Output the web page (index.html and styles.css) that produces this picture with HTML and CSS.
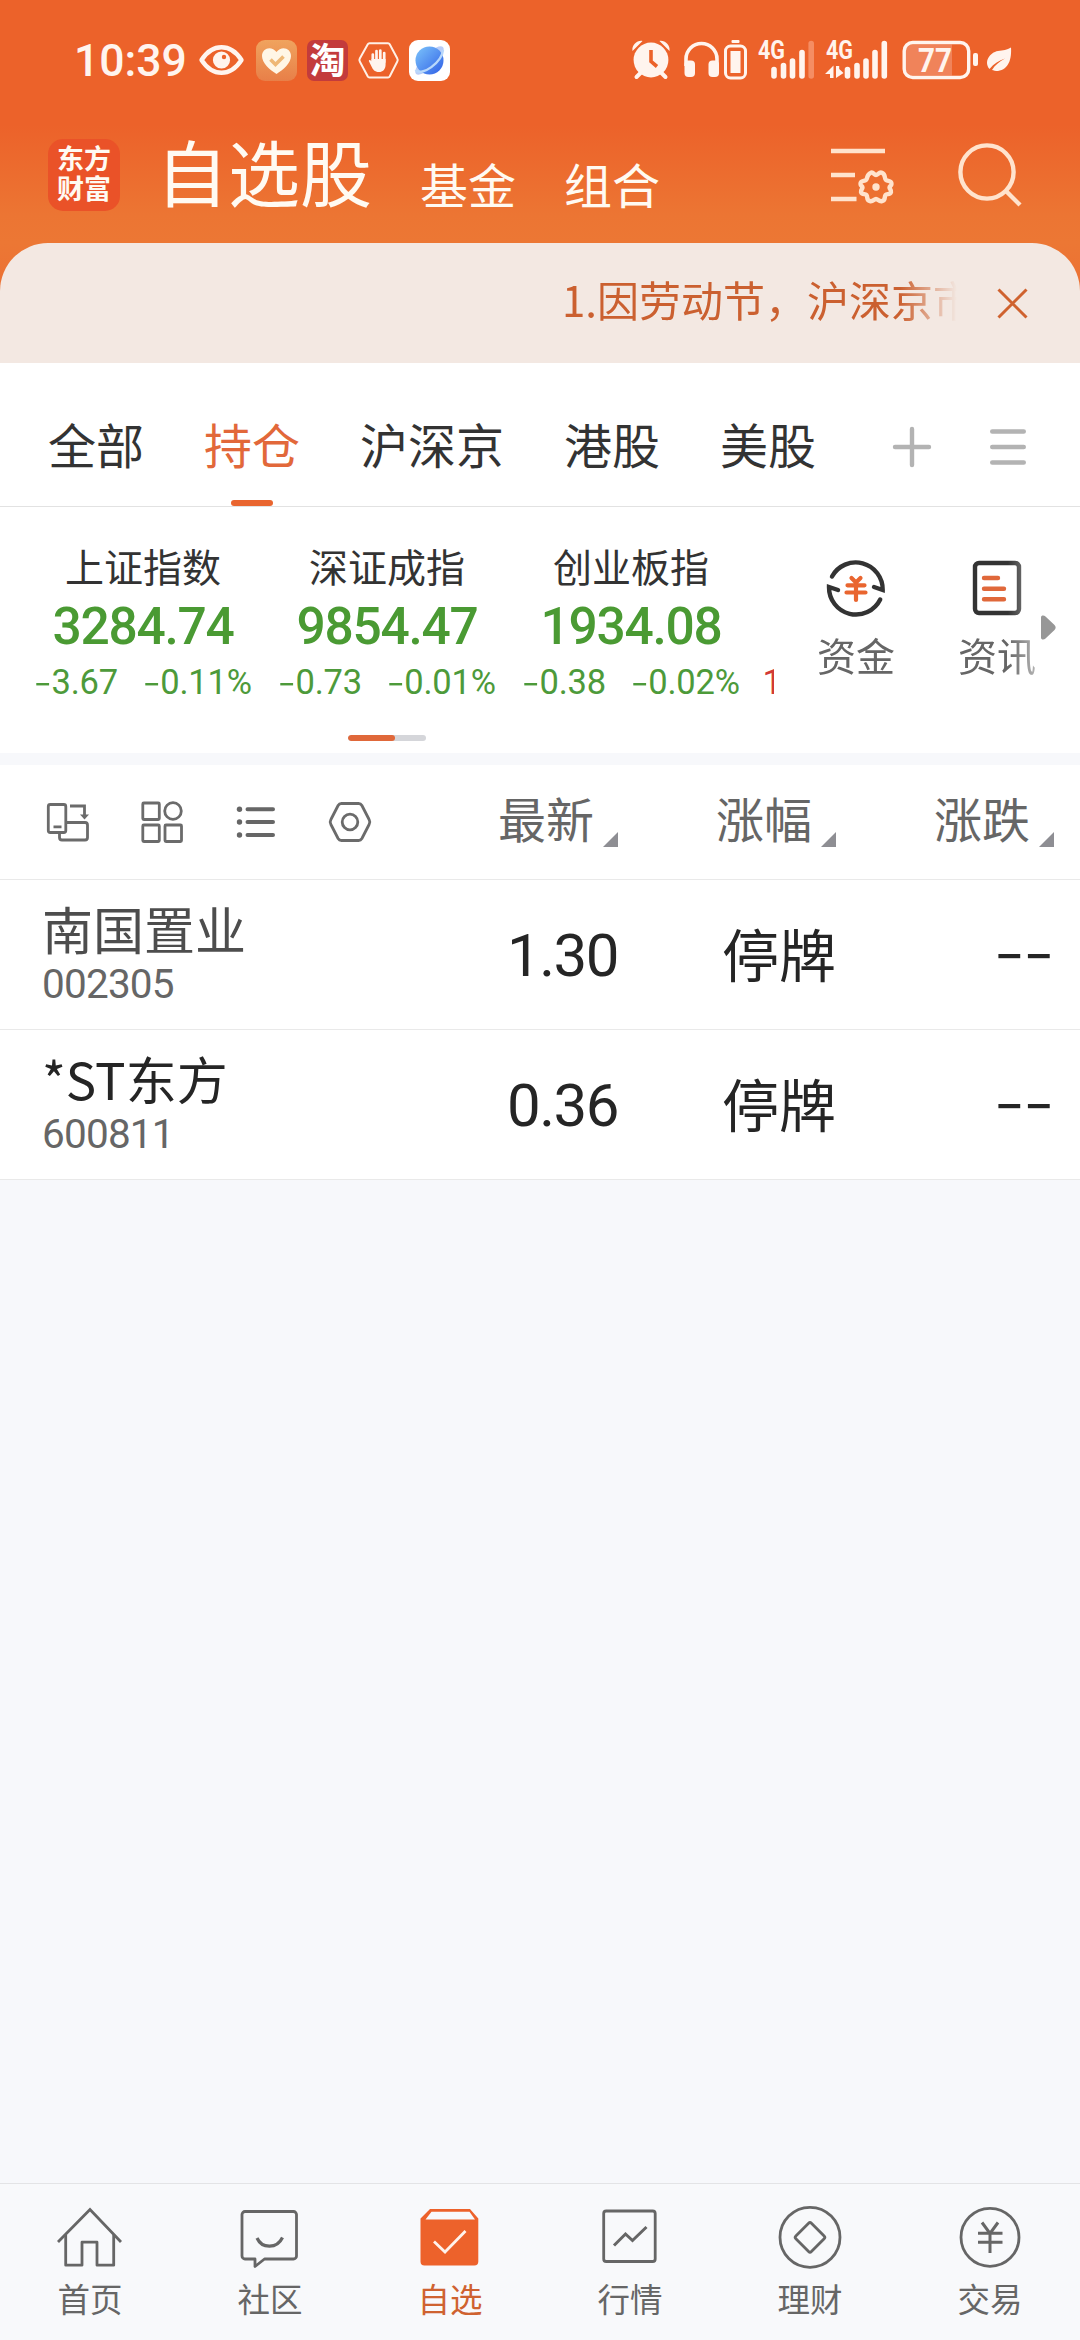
FILE: index.html
```html
<!DOCTYPE html>
<html lang="zh-CN">
<head>
<meta charset="utf-8">
<title>自选股</title>
<link rel="stylesheet" href="styles.css">
</head>
<body>
<div class="app">
  <header class="top">
    <div class="status">
      <div class="status-left">
        <span class="clock">10:39</span>
        <svg width="46" height="44" viewBox="199 38 46 44"><path d="M201.5 60c11-17 29-17 40 0c-11 17-29 17-40 0z" fill="none" stroke="#fff4ee" stroke-width="4.4" stroke-linejoin="round"/><circle cx="221.5" cy="60" r="8.6" fill="#fff4ee"/><circle cx="224" cy="57" r="2.2" fill="#ec622a"/></svg>
        <svg class="g11" width="41" height="41" viewBox="0 0 41 41"><defs><linearGradient id="h" x2="0" y2="1"><stop offset="0" stop-color="#f0a35e"/><stop offset="1" stop-color="#e87f48"/></linearGradient></defs><rect width="41" height="41" rx="9" fill="url(#h)"/><path d="M20.500 34C14 30 6 23 6 16C6 7.500 16 5.500 20.500 12C25 5.500 35 7.500 35 16C35 23 27 30 20.500 34z" fill="#fff6e6"/><path d="M14.500 19.500l5 5l8-8" fill="none" stroke="#efb876" stroke-width="3.600"/></svg>
        <span class="tao">淘</span>
        <svg class="g10" width="41" height="41" viewBox="358 40 41 41"><path d="M369.500 43.300h18.500a2 2 0 0 1 1.700 1l7.600 14.200a3 3 0 0 1 0 3L389.700 76.500a2 2 0 0 1-1.700 1h-18.500a2 2 0 0 1-1.700-1l-8-15a3 3 0 0 1 0-3l8-14.200a2 2 0 0 1 1.700-1z" fill="none" stroke="#fff0e6" stroke-width="2"/><path d="M372.800 62V54.500M376.500 61V51M380.300 61V50.500M384.200 62V53" stroke="#fff4ee" stroke-width="2.700" stroke-linecap="round"/><path d="M371.500 59h14.100v5.500c0 5-3 7.500-6.600 7.500c-4.500 0-6-2.500-7.500-5.500l-2.700-5.500c0-1.500 1.700-1.500 2.700.500z" fill="#fff4ee"/></svg>
        <svg class="g10" width="41" height="41" viewBox="0 0 41 41"><defs><linearGradient id="b" x2="1" y2="1"><stop offset="0" stop-color="#7cc4fb"/><stop offset="1" stop-color="#2f5fe6"/></linearGradient></defs><rect width="41" height="41" rx="9" fill="#fff"/><ellipse cx="20.500" cy="20.500" rx="19" ry="6.500" transform="rotate(-45 20.500 20.500)" fill="#b9cdf8"/><circle cx="20.500" cy="20.500" r="14" fill="url(#b)"/><path d="M6.500 30C13 37 33 22 34 10" fill="none" stroke="#b8d8fb" stroke-width="2.400"/></svg>
      </div>
      <div class="status-right">
        <svg width="38" height="44" viewBox="632.500 38 38 44"><g fill="#fff4ee"><circle cx="651.500" cy="60" r="17.400"/><path d="M633 51c-1-6 5-11 10-10zM670 51c1-6-5-11-10-10z"/></g><path d="M641 73l-4 4M662 73l4 4" stroke="#fff4ee" stroke-width="4" stroke-linecap="round"/><path d="M651.500 50v11.500l6 5" fill="none" stroke="#ec622a" stroke-width="3.600"/></svg>
        <svg class="g14" width="35" height="44" viewBox="684 38 35 44"><path d="M686 66v-7a15.500 15.500 0 0 1 31 0v7" fill="none" stroke="#fff4ee" stroke-width="3.600"/><rect x="684.500" y="60.500" width="10.500" height="16.500" rx="4" fill="#fff4ee"/><rect x="708.500" y="60.500" width="10.500" height="16.500" rx="4" fill="#fff4ee"/></svg>
        <svg class="g5" width="23" height="44" viewBox="724 38 23 44"><rect x="731.500" y="40" width="8" height="3" rx="1" fill="#fff4ee"/><rect x="725.500" y="46" width="20" height="32" rx="5" fill="none" stroke="#fff4ee" stroke-width="3"/><rect x="730.500" y="51" width="10" height="22" fill="#fff4ee"/></svg>
        <svg class="g10" width="58" height="44" viewBox="757 38 58 44"><text x="758" y="59" class="net" textLength="27" lengthAdjust="spacingAndGlyphs">4G</text><path d="M774 69.500V76M783.500 65.500V76M792.500 61V76M802 52.500V76" stroke="#fff4ee" stroke-width="5.600" stroke-linecap="round"/><path d="M811.200 43.500V76" stroke="#f58d63" stroke-width="5.600" stroke-linecap="round"/></svg>
        <svg class="g10" width="63" height="44" viewBox="825 38 63 44"><text x="826" y="59" class="net" textLength="27" lengthAdjust="spacingAndGlyphs">4G</text><path d="M847.500 69.500V76M857 65.500V76M866 61V76M875 52.500V76M884.300 43.500V76" stroke="#fff4ee" stroke-width="5.600" stroke-linecap="round"/><path d="M825 74l8.500-8.500V78h-3.500v-4zM836 66h3.200v3l4.300 4-7.500 5z" fill="#fff4ee"/></svg>
        <svg class="g14" width="77" height="44" viewBox="902 38 77 44"><path d="M912 44.500h40v31h-40a7 7 0 0 1-7-7V51.500a7 7 0 0 1 7-7z" fill="#f0835a"/><rect x="904.200" y="42.500" width="64.500" height="35" rx="8.500" fill="none" stroke="#fff4ee" stroke-width="3.400"/><rect x="973" y="53" width="5" height="13" rx="2" fill="#fff4ee"/><text x="918" y="72" class="bat" textLength="34" lengthAdjust="spacingAndGlyphs">77</text></svg>
        <svg class="g7" width="26" height="44" viewBox="986 38 26 44"><path d="M1011 47.500c.8 11-2 22-13 23.500c-2.500 0-4.500-.500-6-1c3-5 7-8 13-11.500c-6 2-11 5-15.500 10.500c-6-7 0-16.500 8.500-18c5-.800 9-1 13-3.500z" fill="#fff4ee"/></svg>
      </div>
    </div>
    <div class="titlebar">
      <div class="logo"><span>东方</span><span>财富</span></div>
      <h1>自选股</h1>
      <span class="sub">基金</span>
      <span class="sub">组合</span>
      <svg class="cfg" width="66" height="64" viewBox="829 141 66 64"><g fill="none" stroke="#ffe3cd" stroke-width="4.400"><path d="M831 151h54M831 175h24M831 199h25.500"/><path stroke-linejoin="round" d="M871 172.700C873 171.500 874 175 876 175C878 175 879 171.500 882 172.700C886 174.500 884 178.500 886 180C888 181.500 891.500 180 891.500 184C891.500 186 889.500 186 889.500 187.500C889.500 189 891.500 190 891 192C890 195 887 193.500 885.500 195C884 197 886 200 882 201.200C879 202 878 199 876 199C874 199 873 202 870 201.200C866 200 868 197 866.500 195C865 193.500 862 195 861 192C860.500 190 862.500 189 862.500 187.500C862.500 186 860.500 186 860.500 184C860.500 180 864 181.500 866 180C868 178.500 866 174.500 871 172.700z"/></g><circle cx="876" cy="187" r="3.700" fill="#ffe3cd"/></svg>
      <svg class="search" width="66" height="68" viewBox="957 141 66 68"><g fill="none" stroke="#ffe3cd" stroke-width="4.400"><circle cx="987" cy="172" r="26.600"/><path d="M1005.500 190.500l14.500 14.500"/></g></svg>
    </div>
  </header>

  <div class="notice-back"><div class="notice">
    <div class="marquee"><span>1.因劳动节，沪深京市</span></div>
    <svg width="31" height="31" viewBox="0 0 31 31"><path d="M1.500 1.500l28 28M29.500 1.500l-28 28" stroke="#cf622f" stroke-width="3"/></svg>
  </div></div>

  <nav class="tabs">
    <span>全部</span><span class="on">持仓</span><span>沪深京</span><span>港股</span><span>美股</span>
    <svg class="plus" width="40" height="42" viewBox="0 0 40 42"><path d="M3 21h34M20 3v36" stroke="#b3b3b3" stroke-width="4.400" stroke-linecap="round"/></svg>
    <svg class="more" width="38" height="38" viewBox="0 0 38 38"><path d="M3.200 3.500h31.600M3.200 19h31.600M3.200 34.500h31.600" stroke="#b3b3b3" stroke-width="4.400" stroke-linecap="round"/></svg>
  </nav>

  <section class="market">
    <div class="indices">
      <div class="idx"><b>上证指数</b><strong>3284.74</strong><p><span><i>-</i>3.67</span><span><i>-</i>0.11%</span></p></div>
      <div class="idx"><b>深证成指</b><strong>9854.47</strong><p><span><i>-</i>0.73</span><span><i>-</i>0.01%</span></p></div>
      <div class="idx"><b>创业板指</b><strong>1934.08</strong><p><span><i>-</i>0.38</span><span><i>-</i>0.02%</span></p></div>
      <div class="idx next"><b></b><strong></strong><p><span>1</span></p></div>
    </div>
    <div class="tools">
      <div class="tool"><svg width="60" height="60" viewBox="826 558 60 60"><g fill="none" stroke="#333" stroke-width="4.400" stroke-linecap="round" stroke-linejoin="miter"><path d="M832 576.500A27 27 0 0 1 882.700 590L874 587"/><path d="M880.200 599.500A27 27 0 0 1 829 587L838 590"/></g><path d="M851.500 578l4.500 4.500l4.500-4.500M847.500 585.300h17M846.500 592.500h19M856 584v16" fill="none" stroke="#e9652f" stroke-width="4.200" stroke-linecap="round"/></svg><span>资金</span></div>
      <div class="tool"><svg width="60" height="60" viewBox="967 558 60 60"><rect x="975" y="563" width="44" height="50" rx="4" fill="none" stroke="#333" stroke-width="4.400"/><path d="M984 578h14M984 588.700h20M984 599.300h20" stroke="#e0683a" stroke-width="4.400" stroke-linecap="round"/></svg><span>资讯</span></div>
    </div>
    <svg class="arrow" width="15" height="25" viewBox="0 0 15 25"><path d="M0 2.500C0 0 3 0 4.500 1.500L13.500 10Q15.800 12.500 13.500 15L4.500 23.500C3 25 0 25 0 22.500z" fill="#979797"/></svg>
    <div class="pager"><i></i></div>
  </section>

  <section class="table">
    <div class="row head">
      <div class="icons">
        <svg width="46" height="46" viewBox="45 799 46 46"><g fill="none" stroke="#6b6b6b" stroke-width="2.800"><rect x="48.300" y="804.500" width="17.500" height="28" rx="2"/><path d="M53.500 826.800h8M59.500 833v4.500a2.500 2.500 0 0 0 2.500 2.500h23a2.500 2.500 0 0 0 2.500-2.500V825a2.500 2.500 0 0 0-2.500-2.500H66M70 806h14.500v9"/></g><path d="M80 814.500h9l-4.500 5z" fill="#6b6b6b"/></svg>
        <svg width="46" height="46" viewBox="139 799 46 46"><g fill="none" stroke="#6b6b6b" stroke-width="2.800"><rect x="142.800" y="803" width="16.500" height="16.500" rx="1"/><rect x="142.800" y="825" width="16.500" height="16.500" rx="1"/><rect x="165" y="825" width="16.500" height="16.500" rx="1"/><circle cx="173" cy="811" r="8.300"/></g></svg>
        <svg width="46" height="46" viewBox="233 799 46 46"><path d="M247.500 809.200h25.500M247.500 822h25.500M247.500 835h25.500" stroke="#666" stroke-width="4" stroke-linecap="round"/><g fill="#666"><circle cx="239.500" cy="809.200" r="2.700"/><circle cx="239.500" cy="822" r="2.700"/><circle cx="239.500" cy="835" r="2.700"/></g></svg>
        <svg width="46" height="46" viewBox="327 799 46 46"><path d="M341.500 803.500h17a4 4 0 0 1 3.400 2l7.200 14a5 5 0 0 1 0 5l-7.200 14a4 4 0 0 1-3.400 2h-17a4 4 0 0 1-3.400-2l-7.200-14a5 5 0 0 1 0-5l7.200-14a4 4 0 0 1 3.400-2z" fill="none" stroke="#6b6b6b" stroke-width="2.800"/><circle cx="350" cy="822" r="7.800" fill="none" stroke="#6b6b6b" stroke-width="2.800"/></svg>
      </div>
      <div class="col">最新<i></i></div><div class="col">涨幅<i></i></div><div class="col">涨跌<i></i></div>
    </div>
    <div class="row">
      <div class="name dim"><b>南国置业</b><span>002305</span></div>
      <div class="num">1.30</div><div class="halt">停牌</div><div class="dash"><span>--</span></div>
    </div>
    <div class="row">
      <div class="name"><b>*ST东方</b><span>600811</span></div>
      <div class="num">0.36</div><div class="halt">停牌</div><div class="dash"><span>--</span></div>
    </div>
  </section>

  <footer class="bottom">
    <div class="item"><svg width="70" height="66" viewBox="55 2204 70 66"><g fill="none" stroke="#666" stroke-width="2.800"><path d="M58 2242l32-32.500l31 32.500"/><path stroke-linejoin="round" d="M65.700 2235v30.200H82v-23H97v23H113.700V2235"/></g></svg><span>首页</span></div>
    <div class="item"><svg width="70" height="66" viewBox="235 2204 70 66"><path d="M245 2211.500h48.500a3 3 0 0 1 3 3v41.500a3 3 0 0 1-3 3H264.500l-9.500 7.500v-7.500h-10a3 3 0 0 1-3-3v-41.500a3 3 0 0 1 3-3z" fill="none" stroke="#666" stroke-width="2.800" stroke-linejoin="round"/><path d="M257 2238c5 11 20 11 25.500-.500" fill="none" stroke="#666" stroke-width="3.200"/></svg><span>社区</span></div>
    <div class="item on"><svg width="70" height="66" viewBox="415 2204 70 66"><path fill-rule="evenodd" d="M430 2209h40l8.300 9.500V2261.500a4 4 0 0 1-4 4H424.500a4 4 0 0 1-4-4V2218.500zM431.500 2211.800l-6 7.700h49.500l-5.500-7.700z" fill="#ed622b"/><path d="M434 2241.500l11 10.500l20.500-21" fill="none" stroke="#fff3ec" stroke-width="2.800"/></svg><span>自选</span></div>
    <div class="item"><svg width="70" height="66" viewBox="595 2204 70 66"><rect x="603.700" y="2211" width="51.500" height="50.500" rx="2.500" fill="none" stroke="#666" stroke-width="2.800"/><path d="M614 2245.500l11.500-11.500l7 6.500l14-13.500" fill="none" stroke="#666" stroke-width="3"/></svg><span>行情</span></div>
    <div class="item"><svg width="70" height="66" viewBox="774.500 2204 70 66"><circle cx="809.500" cy="2237.300" r="30" fill="none" stroke="#666" stroke-width="2.800"/><rect x="798.500" y="2226.300" width="22" height="22" rx="2" transform="rotate(45 809.500 2237.300)" fill="none" stroke="#666" stroke-width="2.800"/></svg><span>理财</span></div>
    <div class="item"><svg width="70" height="66" viewBox="954 2204 70 66"><circle cx="989" cy="2237.300" r="29" fill="none" stroke="#666" stroke-width="2.800"/><path d="M981 2222.500l8 11l8-11M977 2233.300h24.500M977 2242.300h24.500M989 2233v20" fill="none" stroke="#666" stroke-width="3"/></svg><span>交易</span></div>
  </footer>
</div>
</body>
</html>
```
FILE: styles.css
```css
* { box-sizing: border-box; margin: 0; padding: 0; }
body { width: 1080px; height: 2340px; overflow: hidden; font-family: "Noto Sans CJK SC", sans-serif; color: #333; background: #f7f8fb; }
svg { display: block; flex: none; overflow: visible; }
i { font-style: normal; }
b { font-weight: 400; }
.app { height: 2340px; display: flex; flex-direction: column; }

.top { height: 243px; background: linear-gradient(#ec622a 0, #ec622a 125px, #ec7533 215px, #ec7734 243px); }
.status { height: 120px; display: flex; justify-content: space-between; padding: 0 68px 0 75px; align-items: center; }
.status-left, .status-right { display: flex; align-items: center; }
.clock { width: 125px; margin-left: -1px; padding-top: 1px; font: 500 44.500px/60px Roboto, sans-serif; color: #fff4ee; white-space: nowrap; }
.tao { width: 41px; height: 41px; margin-left: 10px; border-radius: 7px; background: #c33b3c; color: #fff; font-size: 36px; font-weight: 700; line-height: 37px; text-align: center; }
.g5 { margin-left: 5px; }
.g7 { margin-left: 7px; }
.g10 { margin-left: 10px; }
.g11 { margin-left: 11px; }
.g14 { margin-left: 14px; }
.net { font: 700 25px Roboto, sans-serif; fill: #fff4ee; }
.bat { font: 700 34px Roboto, sans-serif; fill: #fff4ee; }

.titlebar { height: 123px; padding-left: 48px; display: flex; align-items: flex-start; color: #fffaf2; }
.logo { width: 72px; height: 72px; margin-top: 19px; padding-top: 4px; border-radius: 15px; background: #ea5228; display: flex; flex-direction: column; align-items: center; font-size: 27px; font-weight: 700; line-height: 30px; }
h1 { margin: 4px 0 0 36px; font-size: 72px; font-weight: 400; line-height: 92px; width: 216px; }
.sub { margin: 33px 0 0 48px; font-size: 48px; line-height: 60px; }
.cfg { margin: 21px 0 0 169px; }
.search { margin: 21px 0 0 62px; }

.notice-back { height: 120px; background: linear-gradient(#ec7734, #ec7033 48px); }
.notice { height: 120px; border-radius: 48px 48px 0 0; background: #f3e8e2; display: flex; align-items: center; color: #cb6030; }
.marquee { width: 957px; margin: 0 40px 8px 0; padding-left: 562px; overflow: hidden; white-space: nowrap; font-size: 42px; line-height: 76px; -webkit-mask-image: linear-gradient(90deg, #000 900px, transparent 957px); mask-image: linear-gradient(90deg, #000 900px, transparent 957px); }

.tabs { height: 144px; padding-left: 48px; display: flex; align-items: flex-start; gap: 60px; background: #fff; border-bottom: 1px solid #e2e2e2; font-size: 48px; }
.tabs span { height: 143px; white-space: nowrap; line-height: 161px; }
.tabs .on { color: #e2683a; position: relative; }
.tabs .on::after { content: ""; position: absolute; left: 27px; bottom: 0; width: 42px; height: 6px; border-radius: 3px; background: #e9652f; }
.plus { margin: 63px 0 0 16px; }
.more { margin: 65px 0 0 -3px; }

.market { height: 246px; position: relative; background: #fff; display: flex; }
.indices { width: 774px; padding-left: 21px; display: flex; overflow: hidden; }
.idx { flex: none; width: 244px; padding-top: 34px; display: flex; flex-direction: column; align-items: center; white-space: nowrap; }
.idx b { height: 48px; font-size: 39px; line-height: 48px; }
.idx strong { height: 60px; margin-top: 8px; font: 500 51.500px/60px Roboto, sans-serif; letter-spacing: -1.300px; color: #4a9a33; }
.idx p { height: 40px; margin-top: 5px; display: flex; gap: 25px; font: 400 34.500px/40px Roboto, sans-serif; letter-spacing: -.2px; color: #4d9a3a; }
.idx p i { display: inline-block; font-family: "Noto Sans CJK SC", sans-serif; line-height: 34px; transform: scaleX(1.45); transform-origin: left; margin-right: 5.500px; }
.next { align-items: flex-start; padding-left: 9.500px; }
.next p { color: #d23a35; }
.tools { width: 282px; margin-left: 11.500px; padding-top: 51px; display: flex; -webkit-mask-image: linear-gradient(90deg, #000 222px, rgba(0,0,0,.45) 252px); mask-image: linear-gradient(90deg, #000 222px, rgba(0,0,0,.45) 252px); }
.tool { width: 141px; display: flex; flex-direction: column; align-items: center; font-size: 39px; line-height: 48px; color: #666; }
.tool span { margin-top: 12px; }
.arrow { position: absolute; left: 1041px; top: 108px; }
.pager { position: absolute; left: 348px; top: 228px; width: 78px; height: 6px; border-radius: 3px; background: #d5d6da; overflow: hidden; }
.pager i { display: block; width: 47px; height: 6px; border-radius: 3px; background: #e0683a; }

.table { margin-top: 12px; background: #fff; }
.row { height: 150px; display: grid; grid-template-columns: 400px 218px 218px 218px; border-bottom: 1px solid #e9e9e9; color: #252525; }
.head { height: 115px; color: #666; }
.icons { display: flex; gap: 48px; padding: 34px 0 0 45px; }
.col { display: flex; justify-content: flex-end; gap: 9px; font-size: 48px; line-height: 70px; padding-top: 17px; }
.col i { width: 15px; height: 15px; margin-top: 50px; background: #8e8e93; clip-path: polygon(100% 0, 100% 100%, 0 100%); }
.name { padding: 18px 0 0 42px; display: flex; flex-direction: column; }
.name b { font-size: 51px; line-height: 60px; }
.name span { font: 400 40.500px/48px Roboto, sans-serif; letter-spacing: -.8px; color: #666; margin-top: 2px; }
.dim b { color: #4d4d4d; }
.num { font: 400 60px/152px Roboto, sans-serif; letter-spacing: -1.500px; padding-right: 0; text-align: right; }
.halt { font-size: 57px; line-height: 145px; text-align: right; }
.dash { font-size: 60px; line-height: 133px; text-align: right; }
.dash span { display: inline-block; transform: scaleX(1.42); transform-origin: right; }

.bottom { margin-top: auto; height: 157px; border-top: 1px solid #e3e4e6; background: #f8f9fb; display: flex; }
.item { width: 180px; padding-top: 20px; display: flex; flex-direction: column; align-items: center; font-size: 32.500px; line-height: 44px; color: #666; }
.item span { margin-top: 6px; }
.item.on { color: #cf6230; }
```
